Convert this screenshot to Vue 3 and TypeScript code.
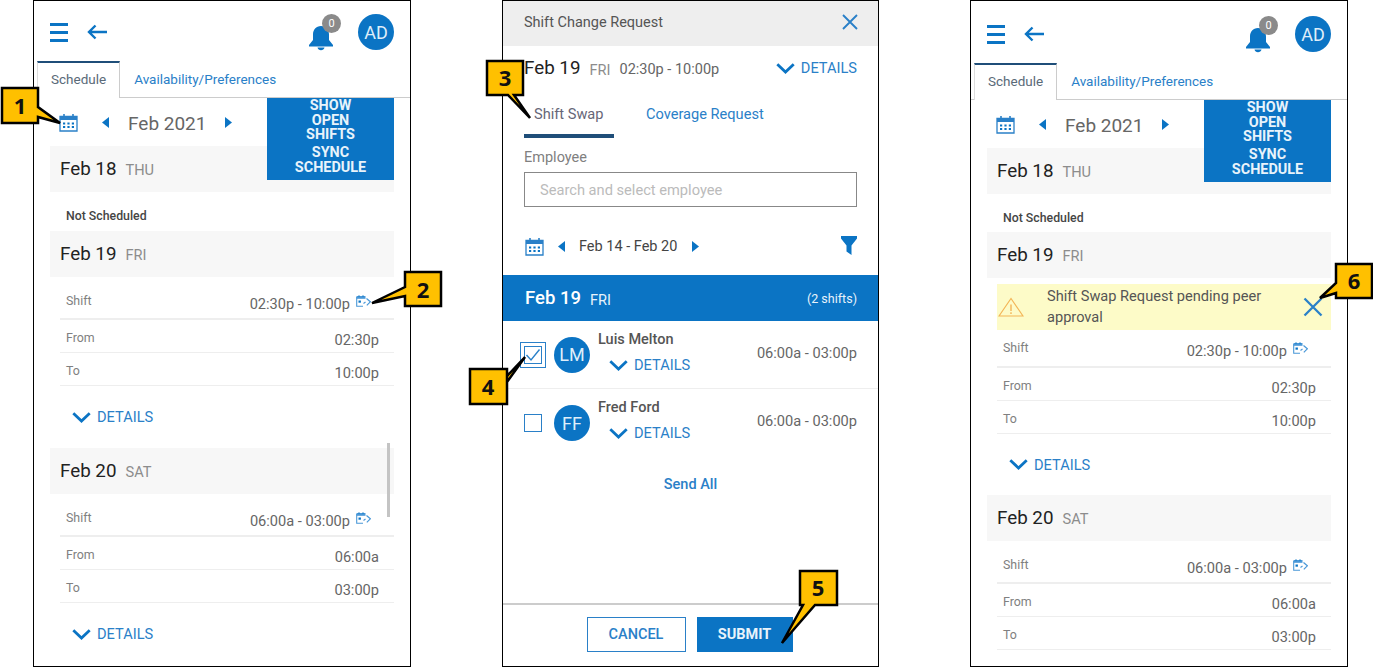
<script setup lang="ts">
interface Day {
  date: string
  dow: string
  none?: boolean
  warn?: string
  shift?: string
  from?: string
  to?: string
  details?: boolean
}
interface SchedulePanel {
  id: string
  days: Day[]
}

const schedulePanels: SchedulePanel[] = [
  {
    id: 'a',
    days: [
      { date: 'Feb 18', dow: 'THU', none: true },
      { date: 'Feb 19', dow: 'FRI', shift: '02:30p - 10:00p', from: '02:30p', to: '10:00p', details: true },
      { date: 'Feb 20', dow: 'SAT', shift: '06:00a - 03:00p', from: '06:00a', to: '03:00p', details: true }
    ]
  },
  {
    id: 'c',
    days: [
      { date: 'Feb 18', dow: 'THU', none: true },
      { date: 'Feb 19', dow: 'FRI', warn: 'Shift Swap Request pending peer approval', shift: '02:30p - 10:00p', from: '02:30p', to: '10:00p', details: true },
      { date: 'Feb 20', dow: 'SAT', shift: '06:00a - 03:00p', from: '06:00a', to: '03:00p' }
    ]
  }
]

const employees = [
  { name: 'Luis Melton', initials: 'LM', time: '06:00a - 03:00p', checked: true },
  { name: 'Fred Ford', initials: 'FF', time: '06:00a - 03:00p', checked: false }
]

const callouts = [
  { n: '1', x: 20, y: 106, d: 'M2 88H38V107L60 123L38 117V123H2Z' },
  { n: '2', x: 423, y: 290, d: 'M405 272H441V306H405V296L372 303L405 287Z' },
  { n: '3', x: 505, y: 78, d: 'M487 61H523V95H514L530 118L508 95H487Z' },
  { n: '4', x: 488, y: 387, d: 'M470 369H507V404H470V369ZM507 369V376L525 357L507 382' },
  { n: '5', x: 818, y: 588, d: 'M800 571H837V605H815L782 643L803 605H800Z' },
  { n: '6', x: 1354, y: 281, d: 'M1336 264H1372V298H1336V293L1320 298L1336 283Z' }
]
</script>

<template>
  <div class="page">
    <template v-for="(p, pi) in schedulePanels" :key="p.id">
      <section class="panel" :class="'panel-' + p.id">
        <header class="topbar">
          <svg class="ic-menu" viewBox="0 0 18 19" width="18" height="19"><path d="M0 1.500H18M0 9.500H18M0 17.500H18" stroke="#0b74c4" stroke-width="3" /></svg>
          <svg class="ic-back" viewBox="0 0 20 16" width="20" height="16"><path d="M20 8H2.500M8.500 1.500L2 8l6.500 6.500" fill="none" stroke="#0b74c4" stroke-width="2.400" /></svg>
          <div class="spacer"></div>
          <div class="bell">
            <svg viewBox="0 0 26 26" width="26" height="26"><path d="M13 1c-5 0-8 3.700-8 8.500v5.500L1 20v1.500h24V20l-4-5V9.500C21 4.700 18 1 13 1zM9.500 22.500h7c-.4 1.700-1.800 2.800-3.500 2.800s-3.100-1.100-3.500-2.800z" fill="#0b74c4" /></svg>
            <span class="badge">0</span>
          </div>
          <span class="avatar avatar-top">AD</span>
        </header>
        <nav class="tabs">
          <span class="tab active">Schedule</span>
          <span class="tab">Availability/Preferences</span>
        </nav>
        <div class="scroll">
          <div class="actions">
            <span class="act">SHOW<br />OPEN<br />SHIFTS</span>
            <span class="act">SYNC<br />SCHEDULE</span>
          </div>
          <div class="month">
            <svg class="cal" viewBox="0 0 19 19" width="19" height="19"><path d="M1 3.500H18V18H1Z" fill="#fff" stroke="#2a80c8" stroke-width="1.300" /><path d="M1 3h17v4H1z" fill="#2a80c8" /><path d="M5 1v3M14 1v3" stroke="#2a80c8" stroke-width="1.600" /><path d="M4 9.500h2.200v2H4zM8.400 9.500h2.200v2H8.400zM12.800 9.500H15v2h-2.200zM4 13h2.200v2H4zM8.400 13h2.200v2H8.400zM12.800 13H15v2h-2.200z" fill="#0b74c4" /></svg>
            <svg class="tri" viewBox="0 0 7 11" width="7" height="11"><path d="M7 0v11L0 5.500z" fill="#0b74c4" /></svg>
            <span class="month-label">Feb 2021</span>
            <svg class="tri" viewBox="0 0 7 11" width="7" height="11"><path d="M0 0v11l7-5.500z" fill="#0b74c4" /></svg>
          </div>
          <div v-for="d in p.days" :key="d.date" class="day">
            <div class="day-head"><span class="date">{{ d.date }}</span><span class="dow">{{ d.dow }}</span></div>
            <div v-if="d.none" class="none">Not Scheduled</div>
            <template v-else>
              <div v-if="d.warn" class="warn">
                <svg viewBox="0 0 26 20" width="26" height="20"><path d="M13 1.500L1 19h24z" fill="none" stroke="#f3b557" stroke-width="1.200" /><path d="M13 7.500v6.500M13 15.300v1.700" stroke="#f3b557" stroke-width="1.400" /></svg>
                <span class="warn-text">{{ d.warn }}</span>
                <svg class="warn-x" viewBox="0 0 20 20" width="20" height="20"><path d="M1.500 1.500l17 17M18.500 1.500l-17 17" stroke="#2a80c8" stroke-width="2.300" /></svg>
              </div>
              <div class="row row-shift">
                <span class="lbl">Shift</span>
                <span class="val">{{ d.shift }}</span>
                <svg class="swap" viewBox="0 0 15 12" width="15" height="12"><path d="M7 2.500H.700V11.300H7" fill="none" stroke="#4a98d8" stroke-width="1.100" /><path d="M.500 1h9v2.800H.500z" fill="#4a98d8" /><path d="M3 .300v1.500M7 .300v1.500" stroke="#0b74c4" stroke-width="1" /><path d="M2.500 5.500h2.400v2.200H2.500z" fill="#0b74c4" /><path d="M10.500 3.500L14.300 6.800l-3.500 3.600" fill="none" stroke="#4a98d8" stroke-width="1.200" /><path d="M7.500 8.500l2-1.500" stroke="#4a98d8" stroke-width="1.100" /></svg>
              </div>
              <div class="row"><span class="lbl">From</span><span class="val">{{ d.from }}</span></div>
              <div class="row"><span class="lbl">To</span><span class="val">{{ d.to }}</span></div>
              <div v-if="d.details" class="details details-day">
                <svg viewBox="0 0 19 11" width="19" height="11"><path d="M1.300 1.300L9.500 9l8.200-7.700" fill="none" stroke="#0b74c4" stroke-width="2.800" /></svg>
                <span>DETAILS</span>
              </div>
            </template>
          </div>
          <div v-if="pi === 0" class="scrollbar"></div>
        </div>
      </section>

      <section v-if="pi === 0" class="panel panel-b">
        <header class="req-head">
          <span>Shift Change Request</span>
          <svg viewBox="0 0 16 16" width="16" height="16"><path d="M1 1l14 14M15 1L1 15" stroke="#2a80c8" stroke-width="1.900" /></svg>
        </header>
        <div class="req-sum">
          <span class="date">Feb 19</span><span class="dow dow-b">FRI</span><span class="req-time">02:30p - 10:00p</span>
          <div class="spacer"></div>
          <div class="details">
            <svg viewBox="0 0 19 11" width="19" height="11"><path d="M1.300 1.300L9.500 9l8.200-7.700" fill="none" stroke="#0b74c4" stroke-width="2.800" /></svg>
            <span>DETAILS</span>
          </div>
        </div>
        <div class="req-tabs">
          <span class="req-tab active">Shift Swap</span>
          <span class="req-tab">Coverage Request</span>
        </div>
        <label class="field-label">Employee</label>
        <div class="input">Search and select employee</div>
        <div class="week">
          <svg viewBox="0 0 19 19" width="19" height="19"><path d="M1 3.500H18V18H1Z" fill="#fff" stroke="#2a80c8" stroke-width="1.300" /><path d="M1 3h17v4H1z" fill="#2a80c8" /><path d="M5 1v3M14 1v3" stroke="#2a80c8" stroke-width="1.600" /><path d="M4 9.500h2.200v2H4zM8.400 9.500h2.200v2H8.400zM12.800 9.500H15v2h-2.200zM4 13h2.200v2H4zM8.400 13h2.200v2H8.400zM12.800 13H15v2h-2.200z" fill="#0b74c4" /></svg>
          <svg class="w-l" viewBox="0 0 7 11" width="7" height="11"><path d="M7 0v11L0 5.500z" fill="#0b74c4" /></svg>
          <span class="week-label">Feb 14 - Feb 20</span>
          <svg viewBox="0 0 7 11" width="7" height="11"><path d="M0 0v11l7-5.500z" fill="#0b74c4" /></svg>
          <div class="spacer"></div>
          <svg class="funnel" viewBox="0 0 16 19" width="16" height="19"><path d="M0 0h16v2.500L10.500 9.500V19l-5-3.500V9.500L0 2.500z" fill="#0b74c4" /></svg>
        </div>
        <div class="band"><span class="date band-date">Feb 19</span><span class="dow band-dow">FRI</span><div class="spacer"></div><span class="band-count">(2 shifts)</span></div>
        <div v-for="e in employees" :key="e.name" class="emp">
          <span class="check" :class="{ on: e.checked }">
            <svg v-if="e.checked" viewBox="0 0 16 14" width="16" height="14"><path d="M1.500 7l4.500 5L14.500 1.500" fill="none" stroke="#2a80c8" stroke-width="1.400" /></svg>
          </span>
          <span class="avatar avatar-emp">{{ e.initials }}</span>
          <div class="emp-main">
            <div class="emp-name">{{ e.name }}</div>
            <div class="details emp-details">
              <svg viewBox="0 0 19 11" width="19" height="11"><path d="M1.300 1.300L9.500 9l8.200-7.700" fill="none" stroke="#0b74c4" stroke-width="2.800" /></svg>
              <span>DETAILS</span>
            </div>
          </div>
          <span class="emp-time">{{ e.time }}</span>
        </div>
        <div class="send-all">Send All</div>
        <footer class="req-foot">
          <span class="btn btn-cancel">CANCEL</span>
          <span class="btn btn-submit">SUBMIT</span>
        </footer>
      </section>
    </template>

    <svg class="marks" viewBox="0 0 1373 667" width="1373" height="667">
      <g v-for="c in callouts" :key="c.n">
        <path :d="c.d" fill="#ffc000" stroke="#000" stroke-width="2.500" stroke-linejoin="miter" />
        <text :x="c.x" :y="c.y + 8" text-anchor="middle" class="mark-n">{{ c.n }}</text>
      </g>
    </svg>
  </div>
</template>

<style scoped>
.page {
  position: relative;
  width: 1373px;
  height: 667px;
  overflow: hidden;
  background: #fff;
  display: flex;
  padding-left: 33px;
  box-sizing: border-box;
  font-family: Roboto, "Liberation Sans", sans-serif;
  color: #666;
}
.panel {
  box-sizing: border-box;
  width: 378px;
  height: 667px;
  border: 1px solid #000;
  flex: none;
  overflow: hidden;
  position: relative;
  display: flex;
  flex-direction: column;
  background: #fff;
}
.panel-b {
  margin-left: 91px;
  width: 377px;
}
.panel-c {
  margin-left: 91px;
}
.spacer {
  flex: 1;
}
.topbar {
  display: flex;
  align-items: center;
  height: 60px;
  flex: none;
  padding: 2px 16px 0 16px;
  box-sizing: border-box;
}
.panel-c .topbar {
  height: 62px;
  padding-top: 4px;
}
.ic-back {
  margin-left: 19px;
}
.bell {
  position: relative;
  width: 26px;
  height: 26px;
  margin-top: 12px;
}
.bell svg {
  display: block;
}
.badge {
  position: absolute;
  left: 14px;
  top: -11px;
  width: 19px;
  height: 19px;
  border-radius: 50%;
  background: #8a8a8a;
  color: #fff;
  font-size: 11px;
  line-height: 19px;
  text-align: center;
}
.avatar {
  border-radius: 50%;
  background: #0b74c4;
  color: #dfeefa;
  display: flex;
  align-items: center;
  justify-content: center;
  flex: none;
}
.avatar-top {
  width: 36px;
  height: 36px;
  margin-left: 24px;
  font-size: 18px;
}
.tabs {
  display: flex;
  height: 37px;
  flex: none;
  border-bottom: 1px solid #ccc;
  box-sizing: border-box;
  position: relative;
  font-size: 13.500px;
  color: #2a80c8;
}
.tab {
  display: flex;
  align-items: center;
  padding: 0 14px;
}
.tab.active {
  margin-left: 3px;
  padding: 0 13px 3px;
  color: #5a6a78;
  border-top: 2px solid #1f4e79;
  border-left: 1px solid #ddd;
  border-right: 1px solid #ccc;
  background: #fff;
  height: 37px;
  box-sizing: border-box;
}
.scroll {
  flex: 1;
  min-height: 0;
  position: relative;
  padding: 0 16px;
}
.actions {
  position: absolute;
  right: 16px;
  top: 0;
  width: 127px;
  height: 82px;
  box-sizing: border-box;
  padding-top: 1px;
  background: #0b74c4;
  color: #e8f3fb;
  font-size: 14.400px;
  font-weight: 700;
  line-height: 14.700px;
  text-align: center;
  display: flex;
  flex-direction: column;
  z-index: 2;
}
.act + .act {
  margin-top: 3px;
}
.month {
  display: flex;
  align-items: center;
  height: 48px;
  padding-left: 9px;
}
.cal + .tri {
  margin-left: 24px;
}
.month-label {
  font-size: 19px;
  margin: 2px 19px 0 19px;
  color: #666;
}
.day-head {
  height: 46px;
  background: #f7f7f7;
  display: flex;
  align-items: center;
  padding-left: 10px;
}
.date {
  font-size: 18.800px;
  color: #222;
}
.dow {
  font-size: 14.600px;
  color: #8c8c8c;
  margin-left: 9px;
  padding-top: 1px;
}
.none {
  height: 39px;
  box-sizing: border-box;
  padding: 17px 0 0 16px;
  font-size: 12.300px;
  font-weight: 500;
  color: #444;
}
.panel-c .none {
  height: 38px;
}
.warn {
  display: flex;
  align-items: center;
  height: 46px;
  background: #fdfbc8;
  margin: 6px 0 0 10px;
  padding-left: 1px;
  font-size: 14.600px;
  line-height: 21px;
  color: #555;
}
.warn-text {
  margin-left: 23px;
  flex: 1;
  width: 240px;
  padding-right: 30px;
}
.warn-x {
  margin-right: 8px;
}
.row {
  display: flex;
  justify-content: space-between;
  height: 33px;
  margin-left: 10px;
  padding: 11px 15px 0 6px;
  box-sizing: border-box;
  border-bottom: 1px solid #eee;
}
.row-shift {
  height: 43px;
  padding-top: 17px;
  border-bottom-width: 2px;
  justify-content: flex-start;
}
.warn + .row-shift {
  height: 38px;
  padding-top: 11px;
}
.lbl {
  font-size: 12.400px;
  color: #808080;
  line-height: 14px;
}
.val {
  font-size: 14.600px;
  color: #666;
  line-height: 16px;
  margin-top: 1px;
}
.row-shift .val {
  margin-left: auto;
  margin-top: 2px;
}
.swap {
  margin: 1px 8px 0 6px;
}
.details {
  display: flex;
  align-items: center;
  font-size: 14.600px;
  color: #2a80c8;
}
.details svg {
  margin-right: 6px;
}
.details-day {
  height: 62px;
  padding: 0 0 0 22px;
  box-sizing: border-box;
}
.panel-c .details-day {
  height: 61px;
}
.scrollbar {
  position: absolute;
  left: 353px;
  top: 345px;
  width: 3px;
  height: 74px;
  background: #c4c4c4;
  z-index: 3;
}
.req-head {
  height: 45px;
  flex: none;
  background: #eee;
  display: flex;
  align-items: center;
  justify-content: space-between;
  padding: 0 20px 3px 21px;
  font-size: 14.500px;
  color: #555;
  box-sizing: border-box;
}
.req-sum {
  display: flex;
  align-items: center;
  height: 44px;
  padding: 0 21px;
  flex: none;
}
.dow-b {
  margin-left: 9px;
  padding-top: 3px;
}
.req-time {
  font-size: 14.500px;
  color: #666;
  margin-left: 9px;
  padding-top: 3px;
}
.req-tabs {
  display: flex;
  height: 48px;
  margin-left: 21px;
  flex: none;
  font-size: 14.600px;
  color: #2a80c8;
}
.req-tab {
  padding-top: 15px;
  box-sizing: border-box;
}
.req-tab.active {
  width: 90px;
  padding-left: 10px;
  color: #667;
  border-bottom: 4px solid #1f4e79;
}
.req-tab + .req-tab {
  margin-left: 32px;
}
.field-label {
  font-size: 14.500px;
  color: #808080;
  margin: 12px 0 0 21px;
  line-height: 16px;
}
.input {
  margin: 6px 21px 0;
  height: 35px;
  flex: none;
  box-sizing: border-box;
  border: 1px solid #888;
  font-size: 14.650px;
  color: #bbb;
  padding-left: 15px;
  line-height: 34px;
}
.week {
  display: flex;
  align-items: center;
  height: 68px;
  flex: none;
  padding: 11px 21px 0 22px;
  box-sizing: border-box;
}
.w-l {
  margin-left: 14px;
}
.week-label {
  font-size: 14.500px;
  color: #444;
  margin: 0 15px 0 14px;
}
.funnel {
  margin-top: -2px;
}
.band {
  height: 46px;
  flex: none;
  background: #0b74c4;
  color: #fff;
  display: flex;
  align-items: center;
  padding: 0 21px 0 22px;
}
.band-date {
  color: #fff;
  font-weight: 500;
  font-size: 18.500px;
}
.band-dow {
  color: #e8f3fb;
  padding-top: 3px;
}
.band-count {
  font-size: 12.500px;
  color: #e8f3fb;
}
.emp {
  display: flex;
  height: 68px;
  box-sizing: border-box;
  padding: 0 21px;
  position: relative;
  align-items: center;
  flex: none;
  border-bottom: 1px solid #eee;
}
.emp + .emp {
  border-bottom: 0;
}
.check {
  width: 18px;
  height: 18px;
  box-sizing: border-box;
  border: 1px solid #2a80c8;
  flex: none;
  display: flex;
  align-items: center;
  justify-content: center;
}
.check.on {
  outline: 1px solid #2a80c8;
  outline-offset: 3px;
}
.avatar-emp {
  width: 36px;
  height: 36px;
  margin-left: 12px;
  font-size: 18px;
}
.emp-main {
  margin-left: 8px;
  flex: 1;
  align-self: flex-start;
  padding-top: 11px;
}
.emp-name {
  font-size: 14.500px;
  font-weight: 500;
  color: #555;
  line-height: 16px;
}
.emp-details {
  margin: 8px 0 0 11px;
}
.emp-time {
  font-size: 14.600px;
  color: #666;
  margin-top: -4px;
}
.send-all {
  text-align: center;
  font-size: 14.500px;
  font-weight: 500;
  color: #2a80c8;
  padding-top: 19px;
}
.req-foot {
  margin-top: auto;
  height: 63px;
  flex: none;
  box-sizing: border-box;
  border-top: 2px solid #ccc;
  display: flex;
  justify-content: center;
  gap: 11px;
  padding: 12px 2px 0 0;
}
.btn {
  height: 35px;
  box-sizing: border-box;
  display: flex;
  align-items: center;
  justify-content: center;
  font-size: 14.500px;
  font-weight: 500;
}
.btn-cancel {
  width: 99px;
  border: 1px solid #2a80c8;
  color: #2a80c8;
}
.btn-submit {
  width: 96px;
  background: #0b74c4;
  color: #e8f3fb;
  font-weight: 700;
}
.marks {
  position: absolute;
  left: 0;
  top: 0;
  pointer-events: none;
  z-index: 5;
}
.mark-n {
  font-family: "Open Sans", "Liberation Sans", sans-serif;
  font-weight: 700;
  font-size: 22px;
  fill: #111;
}
</style>
